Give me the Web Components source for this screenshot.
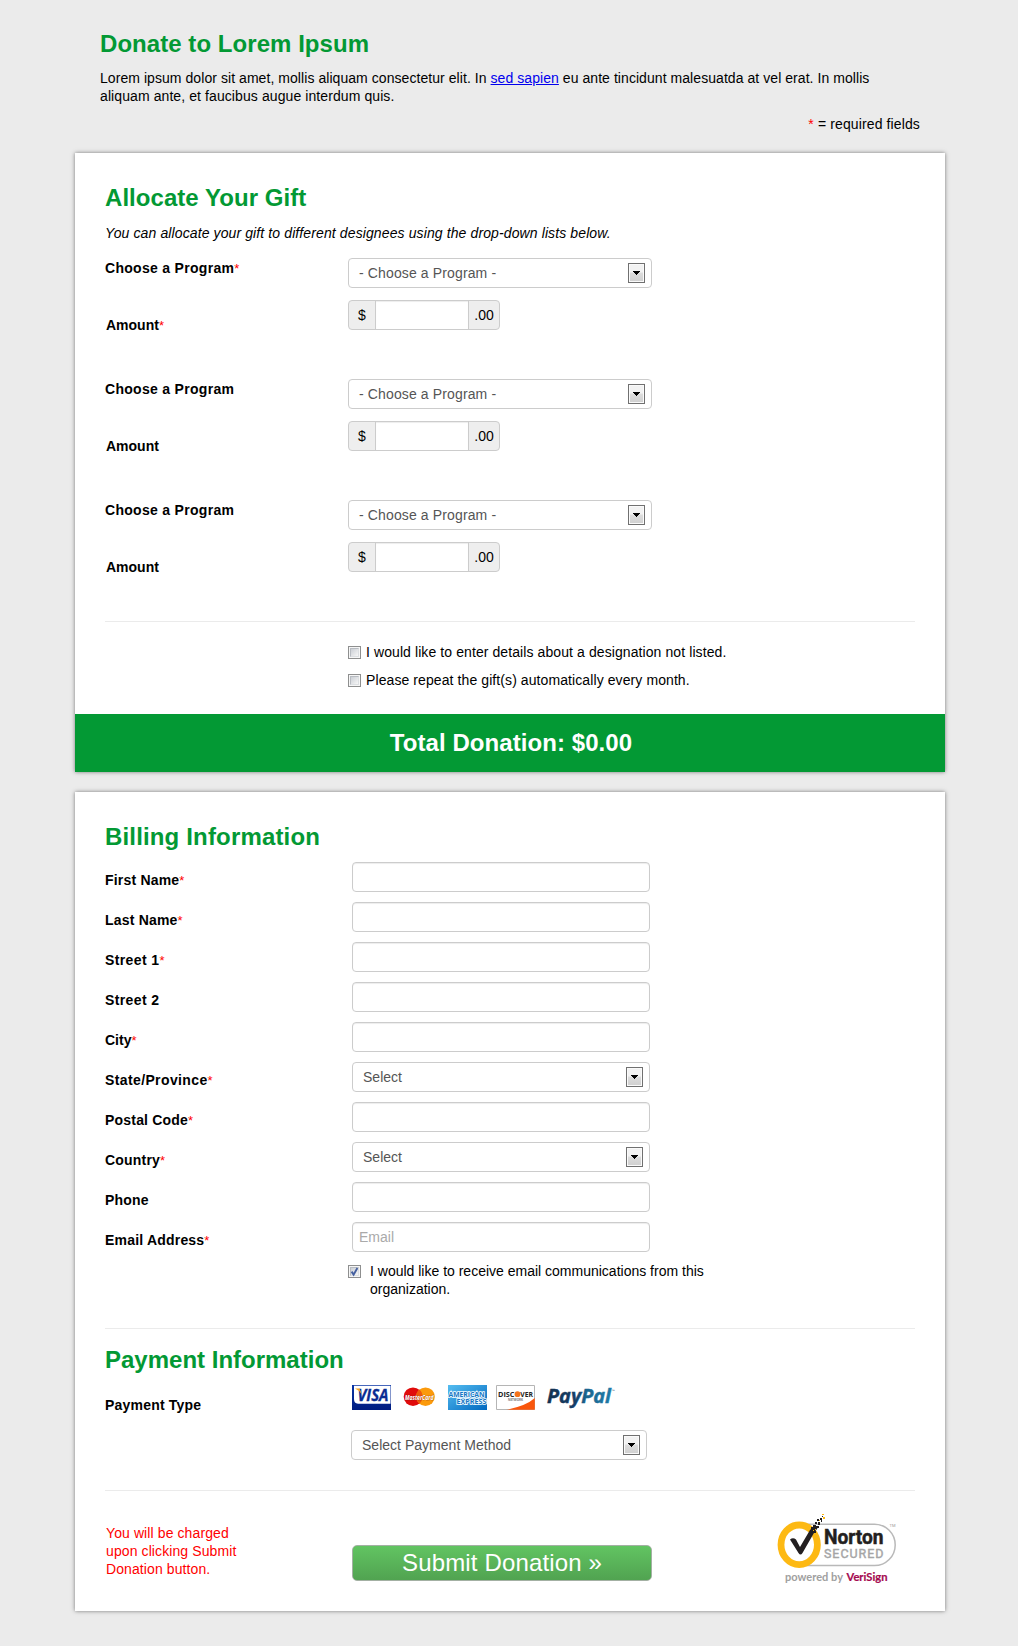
<!DOCTYPE html>
<html lang="en">
<head>
<meta charset="utf-8">
<title>Donate to Lorem Ipsum</title>
<style>
body{margin:0;background:#ebebeb;font:14px/18px "Liberation Sans",Arial,sans-serif;color:#000}
</style>
</head>
<body>
<donate-page></donate-page>
<script>
const define = (name, css, html) => customElements.define(name, class extends HTMLElement {
  constructor() {
    super();
    this.attachShadow({ mode: 'open' });
  }
  connectedCallback() {
    const body = typeof html === 'function' ? html(this) : html;
    this.shadowRoot.innerHTML = `<style>*{box-sizing:border-box}${css}</style>${body}`;
  }
});

define('section-title',
  `:host{display:block;font-size:24px;line-height:28px;font-weight:bold;color:#039934;letter-spacing:var(--track,.05px)}`,
  `<slot></slot>`);

define('form-card',
  `:host{display:block;width:870px;background:#fff;box-shadow:0 0 4px #777}
   .in{padding:31px 30px 0}`,
  `<div class="in"><slot></slot></div><slot name="footer"></slot>`);

define('rule-line', `:host{display:block;height:1px;background:#ebebeb}`, ``);

define('total-bar',
  `:host{display:block;background:#039934;color:#fff;font-size:24px;line-height:28px;font-weight:bold;text-align:center;padding:15px 0;margin-top:25px;text-indent:2px;letter-spacing:.07px}`,
  `<slot></slot>`);

define('field-label',
  `:host{display:block;font-weight:bold;letter-spacing:var(--track,0)} i{font-style:normal;font-weight:normal;font-size:13px;line-height:1;color:#f00;letter-spacing:0}`,
  el => `<slot></slot>${el.hasAttribute('required') ? '<i>*</i>' : ''}`);

define('select-box',
  `:host{display:flex;align-items:center;justify-content:space-between;box-sizing:border-box;width:298px;height:30px;border:1px solid #ccc;border-radius:4px;background:#fff;color:#555;padding:0 6px 0 10px;letter-spacing:var(--track,.02px)}
   .btn{width:17px;height:20px;border:1px solid #707070;background:linear-gradient(#f2f2f2 0 45%,#ddd 50%,#cfcfcf);box-shadow:inset 0 0 0 1px #fafafa;display:flex;align-items:center;justify-content:center}`,
  `<span><slot></slot></span><span class="btn"><svg width="7" height="4" viewBox="0 0 7 4" shape-rendering="crispEdges"><path d="M0 0h7v1H6v1H5v1H4v1H3V3H2V2H1V1H0z"/></svg></span>`);

define('text-box',
  `:host{display:block;width:298px;height:30px}
   input{width:100%;height:30px;border:1px solid #ccc;border-radius:4px;background:#fff;box-shadow:inset 0 1px 1px rgba(0,0,0,.075);padding:0 6px;margin:0;font:inherit;color:#555;display:block}
   input::placeholder{color:#aaa;opacity:1}`,
  el => `<input type="text" placeholder="${el.getAttribute('placeholder') || ''}">`);

define('money-box',
  `:host{display:flex;box-sizing:border-box;width:152px;height:30px;border:1px solid #ccc;border-radius:4px;overflow:hidden;background:#eee;line-height:28px}
   .d{width:26px;text-align:center}
   input{width:94px;height:28px;border:solid #ccc;border-width:0 1px;padding:0 6px;margin:0;font:inherit;background:#fff;box-shadow:inset 0 1px 1px rgba(0,0,0,.075)}
   .c{flex:1;text-align:center}`,
  `<span class="d">$</span><input type="text"><span class="c">.00</span>`);

define('check-line',
  `:host{display:flex;gap:var(--gap,5px);letter-spacing:var(--track,.09px)}
   .b{flex:none;width:13px;height:13px;margin-top:var(--drop,3px);border:1px solid #8e8f8f;background:#f6f6f6;padding:1px}
   .b span{display:block;width:9px;height:9px;border:1px solid #b8bcc2;border-right-color:#dcdfe2;border-bottom-color:#dcdfe2;background:linear-gradient(135deg,#cbcfd5,#f6f6f6)}
   svg{display:block;overflow:visible}`,
  el => `<span class="b"><span>${el.hasAttribute('checked') ? '<svg width="7" height="7" viewBox="0 0 7 7"><path d="M.6 3.6 2.6 6.6 6.4 0" fill="none" stroke="#4560a0" stroke-width="1.9"/></svg>' : ''}</span></span><div><slot></slot></div>`);

define('gift-row',
  `:host{display:block;height:121px}
   .r{display:grid;grid-template-columns:243px 304px;align-items:start;height:42px}
   select-box{width:304px;--track:.13px}
   .l{padding-top:1px;--track:.3px}.a{padding:16px 0 0 1px}`,
  el => { const q = el.hasAttribute('required') ? 'required' : '';
    return `<div class="r"><field-label class="l" ${q}>Choose a Program</field-label><select-box>- Choose a Program -</select-box></div>
    <div class="r"><field-label class="a" ${q}>Amount</field-label><money-box></money-box></div>`; });

define('form-row',
  `:host{display:grid;grid-template-columns:247px 1fr;align-items:start}
   field-label{padding-top:var(--label-top,9px);--track:var(--label-track,.2px)}`,
  el => `<field-label ${el.hasAttribute('required') ? 'required' : ''}>${el.getAttribute('label')}</field-label><slot></slot>`);

define('card-logos',
  `:host{display:flex;height:25px} svg{display:block;overflow:visible} text{font-family:"Open Sans","Liberation Sans",sans-serif}`,
  `<svg width="270" height="25" viewBox="0 0 270 25">
    <defs>
      <linearGradient id="v" x2="0" y2="1"><stop stop-color="#0a35a5"/><stop offset="1" stop-color="#001c80"/></linearGradient>
      <linearGradient id="x" x2="1" y2="1"><stop stop-color="#55bdf0"/><stop offset="1" stop-color="#0068c0"/></linearGradient>
      <linearGradient id="p" x2="1"><stop stop-color="#12304f"/><stop offset=".45" stop-color="#15406a"/><stop offset=".6" stop-color="#1b6690"/><stop offset="1" stop-color="#1f7ba8"/></linearGradient>
    </defs>
    <path d="M0 0h39v25H0z" fill="url(#v)"/><path d="M2 .7h36.500v18H6Q2 18.500 2 14z" fill="#fff"/>
    <text x="5.500" y="15.500" font-size="15.500" font-weight="700" font-style="italic" fill="#0a2d92" stroke="#0a2d92" stroke-width=".3" textLength="31" lengthAdjust="spacingAndGlyphs">VISA</text>
    <path d="M3 3.500h4.500l2.500 6Q7 5 3 3.500z" fill="#f5a623"/>
    <circle cx="61" cy="11.700" r="9.300" fill="#e00b0b"/><circle cx="73.500" cy="11.700" r="9.300" fill="#fb9a0c"/><path d="M67.300 4.600a9.300 9.300 0 0 1 0 14.200 9.300 9.300 0 0 1 0-14.200z" fill="#ee5a0c"/>
    <text x="53" y="14.500" font-size="7.500" font-weight="700" font-style="italic" fill="#fff" stroke="#7a1f10" stroke-width=".4" paint-order="stroke" textLength="28.500" lengthAdjust="spacingAndGlyphs">MasterCard</text>
    <path d="M96 0h39v25H96z" fill="url(#x)"/>
    <g font-size="7.500" font-weight="700" fill="#1476c4" stroke="#f4fbff" stroke-width="1.700" paint-order="stroke"><text x="96.500" y="11.500" textLength="36" lengthAdjust="spacingAndGlyphs">AMERICAN</text><text x="104.500" y="19.200" textLength="30" lengthAdjust="spacingAndGlyphs">EXPRESS</text></g>
    <path d="M144.500.5h38v24h-38z" fill="#fff" stroke="#b5b5b5"/><path d="M154 24.800Q174 21 182.800 13v11.800z" fill="#f9560c"/>
    <g font-weight="700" fill="#222"><text x="146" y="11.800" font-size="7.500" textLength="16.500" lengthAdjust="spacingAndGlyphs">DISC</text><text x="168.300" y="11.800" font-size="7.500" textLength="12.700" lengthAdjust="spacingAndGlyphs">VER</text><text x="156" y="15.800" font-size="3" fill="#777" textLength="15">NETWORK</text></g>
    <circle cx="165.500" cy="9.200" r="2.900" fill="#f4731c"/>
    <text x="195" y="18" font-size="19" font-weight="700" font-style="italic" fill="url(#p)" stroke="url(#p)" stroke-width=".4" textLength="64" lengthAdjust="spacingAndGlyphs">PayPal</text>
    <text x="260" y="6.500" font-size="3.500" fill="#357">™</text>
  </svg>`);

define('norton-seal',
  `:host{display:block} svg{display:block}`,
  `<svg width="122" height="72" viewBox="0 0 122 72" font-family="Roboto,'Liberation Sans',sans-serif">
    <path d="M30 11.200H98.500a20.700 20.700 0 0 1 0 41.400H30z" fill="#fff" stroke="#b9b9b9" stroke-width="1.500"/>
    <ellipse cx="23.200" cy="31.800" rx="18.200" ry="19.800" fill="#fff" stroke="#fdb913" stroke-width="6.800"/>
    <path d="M14 26.500q3-2.500 6 0l4 7.500 10-17 4.500-4.500 3 3-3 3.500L26.500 40q-2 3-4 0z" fill="#231f20"/>
    <g shape-rendering="crispEdges"><path fill="#231f20" d="M37 12h3v3h-3zM39 9h2v2h-2zM42 9h2v3h-2zM41 6h2v2h-2zM44 5h2v2h-2zM40 13h3v2h-3zM45 7h1v2h-1zM35 14h3v2h-3zM38 18h2v2h-2zM46 3h1v1h-1z"/><path fill="#fdb913" d="M46 1h2v1h-2zM47 4h2v2h-2zM43 7h1v1h-1zM39 16h1v1h-1zM37 17h1v1h-1z"/></g>
    <text x="48" y="30.600" font-size="20" font-weight="700" fill="#231f20" stroke="#231f20" stroke-width=".5" textLength="59.500" lengthAdjust="spacingAndGlyphs">Norton</text>
    <text x="48" y="45" font-size="12.500" fill="#a5a5a5" stroke="#a5a5a5" stroke-width=".4" textLength="59.500">SECURED</text>
    <text x="113.500" y="13.500" font-size="4" fill="#999">TM</text>
    <g font-family="Lato,'Open Sans',sans-serif" font-size="10.500" font-weight="700"><text x="9" y="67.700" fill="#a0a0a0" textLength="58" lengthAdjust="spacingAndGlyphs">powered by</text><text x="70.500" y="67.700" fill="#a50a50" stroke="#a50a50" stroke-width=".2" textLength="41" lengthAdjust="spacingAndGlyphs">VeriSign</text></g>
  </svg>`);

define('submit-button',
  `:host{display:block} button{display:block;width:300px;height:36px;padding:0;border:1px solid #a3b0a3;border-radius:5px;background:linear-gradient(#62c462,#51a351);color:#fff;font:24px/30px "Liberation Sans",Arial,sans-serif;letter-spacing:.15px}`,
  `<button><slot></slot></button>`);

define('donate-page', `
  :host{display:block;padding:30px 73px 35px 75px}
  header{padding:0 25px}
  p{margin:0;letter-spacing:var(--track,0)}
  .intro{margin-top:11px;width:790px;--track:.06px}
  .intro span{letter-spacing:.09px}
  a{color:#00e}
  .req{margin:10px 0 20px;text-align:right;--track:.12px} .req i{font-style:normal;color:#f00}
  .hint{font-style:italic;margin:12px 0 16px;--track:.112px}
  .checks{display:flex;flex-direction:column;gap:10px;padding:21px 0 0 243px}
  .two{margin-top:20px}
  .billing{--track:.16px}
  .rows{display:flex;flex-direction:column;gap:10px;margin-top:11px}
  .wide{--label-track:.38px}
  .flat{--label-track:0px}
  .mail{margin:10px 0 30px 243px;width:380px;--gap:9px;--drop:3px;--track:0px}
  .pay{margin-top:17px;--track:0px}
  .payrow{margin:11px 0 30px;--label-top:11px}
  .stack{display:flex;flex-direction:column;gap:20px}
  .stack select-box{width:296px;margin-left:-1px}
  .end{display:flex;align-items:flex-start;height:120px}
  .warn{color:#f00;margin:33px 0 0 1px;width:246px;--track:.1px}
  submit-button{margin-top:54px}
  norton-seal{margin:22px 0 0 124px}`,
  `<header>
    <section-title>Donate to Lorem Ipsum</section-title>
    <p class="intro">Lorem ipsum dolor sit amet, mollis aliquam consectetur elit. In <a href="#">sed sapien</a> eu ante tincidunt malesuatda at vel erat. In mollis<br><span>aliquam ante, et faucibus augue interdum quis.</span></p>
    <p class="req"><i>*</i> = required fields</p>
  </header>
  <form-card>
    <section-title>Allocate Your Gift</section-title>
    <p class="hint">You can allocate your gift to different designees using the drop-down lists below.</p>
    <gift-row required></gift-row><gift-row></gift-row><gift-row></gift-row>
    <rule-line></rule-line>
    <div class="checks">
      <check-line>I would like to enter details about a designation not listed.</check-line>
      <check-line>Please repeat the gift(s) automatically every month.</check-line>
    </div>
    <total-bar slot="footer">Total Donation: $0.00</total-bar>
  </form-card>
  <form-card class="two">
    <section-title class="billing">Billing Information</section-title>
    <div class="rows">
      <form-row label="First Name" required><text-box></text-box></form-row>
      <form-row label="Last Name" required><text-box></text-box></form-row>
      <form-row class="wide" label="Street 1" required><text-box></text-box></form-row>
      <form-row class="wide" label="Street 2"><text-box></text-box></form-row>
      <form-row class="flat" label="City" required><text-box></text-box></form-row>
      <form-row class="wide" label="State/Province" required><select-box>Select</select-box></form-row>
      <form-row label="Postal Code" required><text-box></text-box></form-row>
      <form-row label="Country" required><select-box>Select</select-box></form-row>
      <form-row label="Phone"><text-box></text-box></form-row>
      <form-row label="Email Address" required><text-box placeholder="Email"></text-box></form-row>
    </div>
    <check-line class="mail" checked>I would like to receive email communications from this<br>organization.</check-line>
    <rule-line></rule-line>
    <section-title class="pay">Payment Information</section-title>
    <form-row class="payrow" label="Payment Type"><div class="stack"><card-logos></card-logos><select-box>Select Payment Method</select-box></div></form-row>
    <rule-line></rule-line>
    <div class="end">
      <p class="warn">You will be charged<br>upon clicking Submit<br>Donation button.</p>
      <submit-button>Submit Donation »</submit-button>
      <norton-seal></norton-seal>
    </div>
  </form-card>`);
</script>
</body>
</html>
